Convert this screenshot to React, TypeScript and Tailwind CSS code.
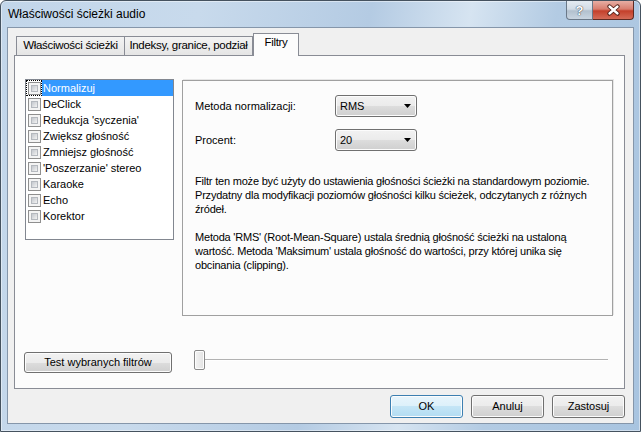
import React from "react";

const filters = [
  "Normalizuj",
  "DeClick",
  "Redukcja 'syczenia'",
  "Zwiększ głośność",
  "Zmniejsz głośność",
  "'Poszerzanie' stereo",
  "Karaoke",
  "Echo",
  "Korektor",
];

const Checkbox = () => (
  <span className="block w-[13px] h-[13px] border border-[#8f8f8f] bg-[#f4f4f4] p-[2px]">
    <span className="block w-full h-full border border-[#b4b8be] bg-[linear-gradient(135deg,#c4c8ce_0%,#dadcdf_50%,#f3f3f3_100%)]" />
  </span>
);

const Combo = ({ value }: { value: string }) => (
  <div className="w-[82px] h-[22px] rounded-[3px] border border-[#707070] bg-[linear-gradient(#f2f2f2_0%,#ebebeb_50%,#dddddd_50%,#cfcfcf_100%)] shadow-[inset_0_0_0_1px_#fcfcfc] flex items-center pl-[4px] pr-[5px]">
    <span className="flex-1">{value}</span>
    <svg width="7" height="4" viewBox="0 0 7 4">
      <path d="M0 0h7L3.5 4z" fill="#000" />
    </svg>
  </div>
);

const Button = ({
  children,
  className = "",
  primary = false,
}: {
  children: React.ReactNode;
  className?: string;
  primary?: boolean;
}) => (
  <div
    className={`flex items-center justify-center rounded-[3px] border shadow-[inset_0_0_0_1px_#fcfcfc] ${
      primary
        ? "border-[#3c7fb1] bg-[linear-gradient(#e8f5fc_0%,#dcf0fa_50%,#c4e5f6_50%,#b2dcf2_100%)]"
        : "border-[#707070] bg-[linear-gradient(#f2f2f2_0%,#ebebeb_50%,#dddddd_50%,#cfcfcf_100%)]"
    } ${className}`}
  >
    {children}
  </div>
);

export default function App() {
  return (
    <div className="w-[641px] h-[432px] flex flex-col border border-[#45525f] rounded-t-[6px] overflow-hidden bg-[linear-gradient(100deg,#c2d6ea_0%,#c8daec_28%,#b4cbe3_52%,#d6e4f1_66%,#b3cbe3_78%,#a8c4e0_100%)] shadow-[inset_0_0_0_1px_rgba(255,255,255,0.45)] font-['Liberation_Sans',Arial,sans-serif] text-[11px] text-black">
      {/* Title bar */}
      <div className="h-[26px] flex items-start pl-[7px] pr-[6px]">
        <div className="flex-1 pt-[5px] text-[12px] leading-[16px]">Właściwości ścieżki audio</div>
        <div className="flex">
          <div className="w-[27px] h-[19px] rounded-bl-[4px] border border-t-0 border-[#6a7888] bg-[linear-gradient(#e4ebf2_0%,#d2dce6_45%,#b2c0ce_55%,#c9d5e1_100%)] flex items-center justify-center text-[13px] font-bold leading-none text-white [text-shadow:0_0_1px_#2f3b47,0_0_1px_#2f3b47]">
            ?
          </div>
          <div className="w-[41px] h-[19px] rounded-br-[4px] border border-t-0 border-l-0 border-[#5e2a22] bg-[linear-gradient(#e7aea4_0%,#d87d6e_45%,#c4402b_55%,#d46b57_100%)] flex items-center justify-center">
            <svg width="15" height="12" viewBox="0 0 15 12">
              <path d="M3.5 2.5l8 7M11.5 2.5l-8 7" stroke="#4a1a12" strokeWidth="4.2" strokeLinecap="round" />
              <path d="M3.5 2.5l8 7M11.5 2.5l-8 7" stroke="#ffffff" strokeWidth="2.4" strokeLinecap="round" />
            </svg>
          </div>
        </div>
      </div>

      {/* Client area */}
      <div className="flex-1 mx-[6px] mb-[7px] border border-[#8596aa] bg-[#f0f0f0] flex flex-col pl-[6px] pr-[8px]">
        {/* Tabs */}
        <div className="pt-[5px] pl-[2px] h-[27px] flex items-end">
          <div className="w-[109px] h-[19px] border border-b-0 border-[#898c95] bg-[linear-gradient(#f3f3f3,#e5e5e5)] text-center text-[11.5px] tracking-[-0.3px] leading-[16px]">
            Właściwości ścieżki
          </div>
          <div className="-ml-px w-[129px] h-[19px] border border-b-0 border-[#898c95] bg-[linear-gradient(#f3f3f3,#e5e5e5)] text-center text-[11.5px] tracking-[-0.3px] leading-[16px]">
            Indeksy, granice, podział
          </div>
          <div className="relative z-10 -mb-px w-[46px] h-[23px] border border-b-0 border-[#898c95] bg-[#fcfcfc] text-center text-[11.5px] tracking-[-0.3px] leading-[16px]">
            Filtry
          </div>
        </div>

        {/* Tab panel */}
        <div className="h-[334px] border border-[#898c95] bg-[#fcfcfc] flex flex-col">
          <div className="mt-[23px] pl-[10px] flex items-start">
            <div className="w-[149px] h-[161px] border border-[#828790] bg-white">
              {filters.map((f, i) => (
                <div key={f} className="h-[16px] flex items-center">
                  <span
                    className={`h-[16px] pl-[2px] pr-px flex items-center ${
                      i === 0 ? "outline outline-1 outline-dotted outline-black -outline-offset-1" : ""
                    }`}
                  >
                    <Checkbox />
                  </span>
                  <span
                    className={`flex-1 h-[16px] pl-px leading-[16px] ${
                      i === 0 ? "bg-[#3399ff] text-white" : ""
                    }`}
                  >
                    {f}
                  </span>
                </div>
              ))}
            </div>

            <div className="ml-[8px] mt-px w-[431px] h-[236px] border border-[#a0a0a0] shadow-[1px_-1px_0_#e6e6e6] pl-[12px]">
              <div className="mt-[14px] flex items-center">
                <span className="w-[140px]">Metoda normalizacji:</span>
                <Combo value="RMS" />
              </div>
              <div className="mt-[12px] flex items-center">
                <span className="w-[140px]">Procent:</span>
                <Combo value="20" />
              </div>
              <p className="mt-[23px] leading-[14px] tracking-[-0.2px]">
                Filtr ten może być użyty do ustawienia głośności ścieżki na standardowym poziomie.
                <br />
                Przydatny dla modyfikacji poziomów głośności kilku ścieżek, odczytanych z różnych
                <br />
                źródeł.
              </p>
              <p className="mt-[14px] leading-[14px] tracking-[-0.2px]">
                Metoda 'RMS' (Root-Mean-Square) ustala średnią głośność ścieżki na ustaloną
                <br />
                wartość. Metoda 'Maksimum' ustala głośność do wartości, przy której unika się
                <br />
                obcinania (clipping).
              </p>
            </div>
          </div>

          <div className="mt-[34px] pl-[9px] flex items-start">
            <Button className="mt-[2px] w-[148px] h-[21px]">Test wybranych filtrów</Button>
            <div className="ml-[22px] w-[414px] h-[20px] flex items-center">
              <div className="w-[11px] h-[20px] rounded-[2px] border border-[#8a8a8a] bg-[linear-gradient(90deg,#f4f4f4,#e2e2e2)] shadow-[inset_0_0_0_1px_#fdfdfd]" />
              <div className="flex-1 h-[2px] border-t border-[#b2b2b2] border-b border-b-white" />
            </div>
          </div>
        </div>

        {/* Dialog buttons */}
        <div className="mt-[6px] h-[23px] flex justify-end gap-[8px]">
          <Button primary className="w-[73px] h-[23px]">OK</Button>
          <Button className="w-[73px] h-[23px]">Anuluj</Button>
          <Button className="w-[73px] h-[23px]">Zastosuj</Button>
        </div>
      </div>
    </div>
  );
}
